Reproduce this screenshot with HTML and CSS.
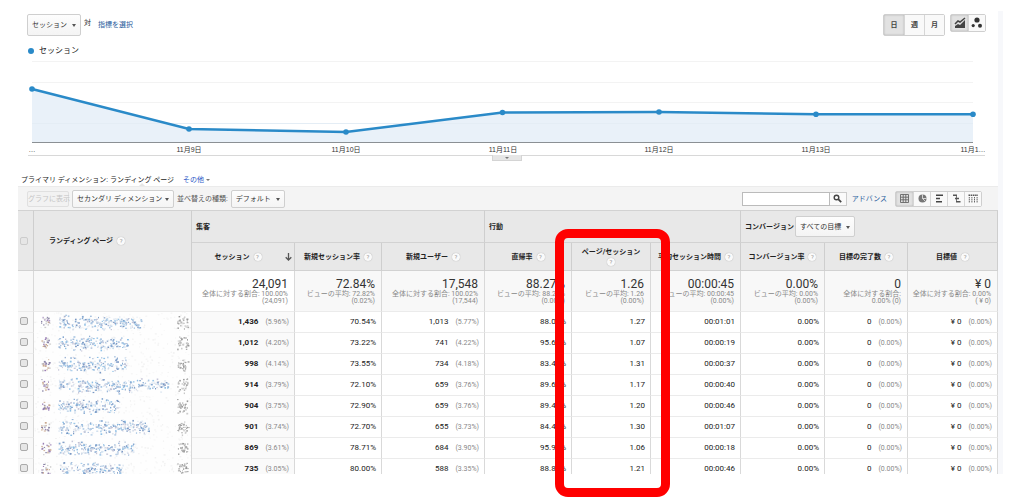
FILE: index.html
```html
<!DOCTYPE html>
<html lang="ja">
<head>
<meta charset="utf-8">
<title>ランディング ページ</title>
<link rel="stylesheet" href="styles.css">
</head>
<body>
<main class="report">
  <header class="topbar">
    <span class="dropdown"><select class="select metric" aria-label="指標"><option>セッション</option></select></span>
    <span class="versus">対</span>
    <a class="link pick" href="#">指標を選択</a>
    <div class="segment period">
      <button class="seg on">日</button><button class="seg">週</button><button class="seg">月</button>
    </div>
    <div class="segment charts">
      <button class="seg on" aria-label="折れ線グラフ"><svg width="12" height="12" viewBox="0 0 12 12"><path d="M1 11V9l3-2 2 1 5-5v8z" fill="#444"/><path d="M1 7l3-3 2 1 5-4" fill="none" stroke="#444" stroke-width="1.5"/></svg></button><button class="seg" aria-label="モーション グラフ"><svg width="12" height="12" viewBox="0 0 12 12"><circle cx="6" cy="3" r="2.6" fill="#333"/><circle cx="2.2" cy="8.6" r="1.6" fill="#333"/><circle cx="9" cy="8.8" r="2" fill="#333"/></svg></button>
    </div>
  </header>
  <div class="legend"><span class="dot"></span>セッション</div>
  <section class="chart">
    <svg class="plot" viewBox="0 0 957 97">
      <g stroke="#f3f3f3"><path d="M4 3.5H945M4 24.500H945M4 44.500H945M4 65.500H945"/></g>
      <path d="M4 31L161 71L318 74L474.500 54.500L631 54L788 56.300H945V84H4z" fill="#e9f1f9"/>
      <path d="M4 65.500H945" stroke="#e4edf5"/>
      <path d="M4 84.500H945" stroke="#8b9094"/>
      <path d="M4 31L161 71L318 74L474.500 54.500L631 54L788 56.300H945" fill="none" stroke="#2a8ac8" stroke-width="2.400"/>
      <g fill="#2a8ac8"><circle cx="4" cy="31" r="2.800"/><circle cx="161" cy="71" r="2.800"/><circle cx="318" cy="74" r="2.800"/><circle cx="474.500" cy="54.500" r="2.800"/><circle cx="631" cy="54" r="2.800"/><circle cx="788" cy="56.300" r="2.800"/><circle cx="945" cy="56.300" r="2.800"/></g>
      <g class="axis"><text x="4" y="94">…</text><text x="161" y="94">11月9日</text><text x="318" y="94">11月10日</text><text x="475" y="94">11月11日</text><text x="631" y="94">11月12日</text><text x="788" y="94">11月13日</text><text x="945" y="94">11月1…</text></g>
    </svg>
    <button class="handle" aria-label="グラフを開閉"></button>
  </section>
  <nav class="dimensions">
    <span>プライマリ ディメンション:</span>
    <span class="current">ランディング ページ</span>
    <a class="link other" href="#">その他</a>
  </nav>
  <div class="tools">
    <button class="plot-rows" disabled>グラフに表示</button>
    <span class="dropdown"><select class="select secondary" aria-label="セカンダリ ディメンション"><option>セカンダリ ディメンション</option></select></span>
    <label class="sort-label" for="sort">並べ替えの種類:</label>
    <span class="dropdown"><select class="select sort" id="sort"><option>デフォルト</option></select></span>
    <div class="search"><input class="query" type="text" aria-label="検索"><button class="go" aria-label="検索"><svg width="9" height="9" viewBox="0 0 9 9"><circle cx="3.500" cy="3.500" r="2.300" fill="none" stroke="#444" stroke-width="1.400"/><path d="M5.200 5.200L8.200 8.200" stroke="#444" stroke-width="1.800"/></svg></button></div>
    <a class="link advanced" href="#">アドバンス</a>
    <div class="segment views">
      <button class="seg on" aria-label="表"><svg width="9" height="9" viewBox="0 0 9 9"><path d="M.5 .5h8v8h-8zM.5 3.200h8M.5 5.800h8M3.200 .5v8M5.800 .5v8" fill="none" stroke="#666" stroke-width=".9"/></svg></button><button class="seg" aria-label="割合"><svg width="9" height="9" viewBox="0 0 9 9"><circle cx="4.500" cy="4.500" r="4" fill="#777"/><path d="M4.500 .5v4h4M4.500 4.500L7.300 7.300" fill="none" stroke="#eee" stroke-width=".8"/></svg></button><button class="seg" aria-label="サマリー"><svg width="9" height="9" viewBox="0 0 9 9"><path d="M1 1.200h7M1 4.500h4M1 7.800h6" stroke="#444" stroke-width="1.600"/></svg></button><button class="seg" aria-label="比較"><svg width="9" height="9" viewBox="0 0 9 9"><path d="M1 1.200h4M3 4.500h4M4 7.800h4.500" stroke="#555" stroke-width="1.400"/><path d="M4.500 1v7" stroke="#555" stroke-width=".8"/></svg></button><button class="seg" aria-label="ピボット"><svg width="10" height="9" viewBox="0 0 10 9"><path d="M.5 1.200H10" stroke="#555" stroke-width="1.400" stroke-dasharray="1.600 .6"/><path d="M1.300 3v6M3.900 3v6M6.500 3v6M9.100 3v6" stroke="#666" stroke-dasharray="1.400 .5"/></svg></button>
    </div>
  </div>
  <section class="data">
    <div class="clip">
      <table class="grid">
        <colgroup><col class="c16"><col class="c158"><col class="c103"><col class="c87"><col class="c103"><col class="c87"><col class="c79"><col class="c90"><col class="c84"><col class="c83"><col class="c90"></colgroup>
        <thead>
          <tr class="groups">
            <th rowspan="2" class="check"><input type="checkbox" class="tick faint" aria-label="すべて選択"></th>
            <th rowspan="2" class="landing">ランディング ページ<i class="help">?</i></th>
            <th colspan="3">集客</th>
            <th colspan="3">行動</th>
            <th colspan="3"><div class="conversion"><label for="goal">コンバージョン</label><span class="dropdown"><select class="select goal" id="goal"><option>すべての目標</option></select></span></div></th>
          </tr>
          <tr class="names">
            <th><div class="sorted">セッション<i class="help">?</i><svg class="arrow" width="7" height="8" viewBox="0 0 7 8"><path d="M3.500 0v7M.7 4.200l2.800 2.800 2.800-2.800" fill="none" stroke="#555" stroke-width="1.300"/></svg></div></th>
            <th>新規セッション率<i class="help">?</i></th>
            <th>新規ユーザー<i class="help">?</i></th>
            <th>直帰率<i class="help">?</i></th>
            <th>ページ/セッション<br><i class="help">?</i></th>
            <th>平均セッション時間<i class="help">?</i></th>
            <th>コンバージョン率<i class="help">?</i></th>
            <th>目標の完了数<i class="help">?</i></th>
            <th>目標値<i class="help">?</i></th>
          </tr>
        </thead>
        <tbody id="rows">
          <tr class="summary">
            <td></td><td></td>
            <td class="primary"><b>24,091</b>全体に対する割合: 100.00%<br>(24,091)</td>
            <td><b>72.84%</b>ビューの平均: 72.82%<br>(0.02%)</td>
            <td><b>17,548</b>全体に対する割合: 100.02%<br>(17,544)</td>
            <td><b>88.27%</b>ビューの平均: 88.27%<br>(0.00%)</td>
            <td><b>1.26</b>ビューの平均: 1.26<br>(0.00%)</td>
            <td><b>00:00:45</b>ビューの平均: 00:00:45<br>(0.00%)</td>
            <td><b>0.00%</b>ビューの平均: 0.00%<br>(0.00%)</td>
            <td><b>0</b>全体に対する割合:<br>0.00% (0)</td>
            <td><b>¥ 0</b>全体に対する割合: 0.00%<br>( ¥ 0)</td>
          </tr>
        </tbody>
      </table>
    </div>
    <div class="marker"></div>
  </section>
</main>
<script src="rows.js"></script>
</body>
</html>
```
FILE: styles.css
```css
* { box-sizing: border-box; }
body {
  margin: 0;
  min-height: 100vh;
  padding: 11px 6px 30px 18px;
  background: #fff;
  color: #222;
  font: 7px/10px Roboto, "Noto Sans CJK JP", sans-serif;
}
button, input, select { font: inherit; color: inherit; margin: 0; }
.report { border-right: 5px solid #f7f8fb; }
.link { color: #2a5d9c; text-decoration: none; }

.dropdown { position: relative; display: inline-flex; }
.dropdown::after {
  content: "";
  position: absolute;
  right: 5px;
  top: 50%;
  margin-top: -1px;
  border: 2px solid transparent;
  border-top: 3px solid #555;
  border-bottom: 0;
  pointer-events: none;
}
.select {
  appearance: none;
  height: 18px;
  padding: 0 10px 0 4px;
  border: 1px solid #cfcfcf;
  border-radius: 2px;
  background: linear-gradient(#fdfdfd, #f4f4f4);
  color: #333;
}
.metric { width: 54px; height: 22px; }
.secondary { width: 102px; }
.sort { width: 54px; }
.goal { width: 60px; height: 21px; font-weight: 400; }

.topbar { display: flex; align-items: flex-start; padding: 3px 12px 0 9px; height: 29px; }
.versus { margin: 4px 0 0 3px; }
.pick { margin: 6px 0 0 7px; }
.segment { display: flex; border: 1px solid #cfcfcf; border-radius: 2px; }
.seg {
  display: flex;
  align-items: center;
  justify-content: center;
  padding: 0;
  border: 0;
  background: #f9f9f9;
  font-weight: 700;
  color: #444;
}
.seg + .seg { border-left: 1px solid #d6d6d6; }
.seg.on { background: #e2e2e2; box-shadow: inset 0 0 2px #aaa; }
.period { margin-left: auto; }
.period .seg { width: 20px; height: 20px; }
.charts { margin-left: 5px; }
.charts .seg { width: 17px; height: 16px; }

.legend { display: flex; align-items: center; gap: 5px; height: 18px; padding: 3px 0 0 10px; font-size: 8px; }
.dot { width: 6px; height: 6px; border-radius: 50%; background: #2a8ac8; }

.chart { position: relative; margin: 0 13px 0 10px; border-bottom: 1px solid #d8d8d8; }
.plot { display: block; width: 100%; }
.axis { font: 7px "Liberation Sans", "Noto Sans CJK JP", sans-serif; fill: #333; text-anchor: middle; }
.handle {
  position: absolute;
  left: 50%;
  top: 100%;
  width: 30px;
  height: 6px;
  margin-left: -15px;
  padding: 0;
  border: 1px solid #d4d4d4;
  border-top: 0;
  background: #e6e6e6;
}
.handle::before, .other::after {
  content: "";
  display: inline-block;
  width: 0;
  border: 2px solid transparent;
  border-top-color: #777;
  border-bottom: 0;
}
.handle::before { display: block; margin: 0 auto; }

.dimensions { display: flex; gap: 2px; padding: 17px 0 0 3px; height: 30px; line-height: 14px; }
.current { position: relative; margin-right: 7px; }
.current::after {
  content: "";
  position: absolute;
  left: 50%;
  bottom: 0;
  margin-left: -3px;
  border: 3px solid transparent;
  border-top: 0;
  border-bottom-color: #e6e6e6;
}
.other { color: #2a56c6; }
.other::after { margin: 0 0 1px 2px; }

.tools { display: flex; align-items: center; gap: 3px; height: 24px; padding: 0 16px 0 9px; background: #f4f4f4; border-top: 1px solid #ebebeb; }
.plot-rows { width: 42px; height: 16px; padding: 0; border: 1px solid #e0e0e0; border-radius: 2px; background: #f2f2f2; color: #c4c4c4; white-space: nowrap; }
.sort-label { color: #555; }
.search { display: flex; margin-left: auto; }
.query { width: 88px; height: 14px; padding: 0 2px; border: 1px solid #bbb; background: #fff; }
.go { display: flex; align-items: center; justify-content: center; width: 17px; height: 14px; padding: 0; border: 1px solid #ccc; border-left: 0; background: #fafafa; }
.advanced { margin: 0 5px 0 2px; }
.views .seg { width: 17px; height: 14px; }

.data { position: relative; }
.clip { overflow: hidden; }
.grid { width: 100%; margin-bottom: -6px; table-layout: fixed; border-collapse: separate; border-spacing: 0; }
.c16 { width: 16px; }
.c158 { width: 158px; }
.c103 { width: 103px; }
.c87 { width: 87px; }
.c79 { width: 79px; }
.c90 { width: 90px; }
.c84 { width: 84px; }
.c83 { width: 83px; }
th, td { border-right: 1px solid #d9d9d9; }
th { padding: 0; background: #e8e8e8; border-right-color: #cecece; border-bottom: 1px solid #d2d2d2; white-space: nowrap; }
.groups th { height: 33px; border-top: 1px solid #d2d2d2; padding-left: 4px; text-align: left; }
.names th { height: 28px; }
.groups .check { padding: 0 0 0 2px; }
.groups .landing { padding-left: 15px; }
.conversion { display: flex; align-items: center; gap: 1px; }
.sorted { position: relative; padding-right: 10px; }
.arrow { position: absolute; right: 2px; top: 1px; }
.help {
  display: inline-block;
  width: 8px;
  height: 8px;
  margin-left: 4px;
  border-radius: 50%;
  background: #fafafa;
  box-shadow: 0 0 1px #999;
  color: #999;
  font: 6px/8px Roboto, sans-serif;
  text-align: center;
}
br + .help { margin-left: 0; }
.tick { appearance: none; display: block; width: 8px; height: 8px; border: 1px solid #aaa; border-radius: 2px; background: #e6e6e6; }
.faint { border-color: #ccc; }

td { height: 21px; padding: 0 5px 0 0; border-bottom: 1px solid #ebebeb; text-align: right; font-size: 8px; white-space: nowrap; }
.summary td { height: 41px; padding: 7px 6px 0 0; background: #f8f8f8; color: #888; font-size: 7px; line-height: 7px; vertical-align: top; }
.summary b { display: block; color: #333; font-size: 12px; line-height: 13px; font-weight: 400; }
.summary .primary { background: #fff; }
td.check-cell { padding: 0 0 2px 2px; background: #f8f8f8; }
.lead { background: #fafafa; font-weight: 700; }
td.masked { padding: 0; border-bottom: 0; background: #fefefe; }
.speckle { display: block; width: 157px; height: 21px; }
.share { margin-left: 7px; color: #888; font-size: 7px; font-weight: 400; }

.marker { position: absolute; top: 19px; bottom: -23px; left: 54.8%; width: 11.7%; border: 9px solid #f00; border-radius: 13px; }
```
FILE: rows.js
```js
const rows = [
  ['1,436', '5.96', '70.54', '1,013', '5.77', '88.02', '1.27', '00:01:01', 108],
  ['1,012', '4.20', '73.22', '741', '4.22', '95.65', '1.07', '00:00:19', 93],
  ['998', '4.14', '73.55', '734', '4.18', '83.47', '1.31', '00:00:37', 92],
  ['914', '3.79', '72.10', '659', '3.76', '89.61', '1.17', '00:00:40', 134],
  ['904', '3.75', '72.90', '659', '3.76', '89.49', '1.20', '00:00:46', 85],
  ['901', '3.74', '72.70', '655', '3.73', '84.46', '1.30', '00:01:07', 116],
  ['869', '3.61', '78.71', '684', '3.90', '95.97', '1.06', '00:00:18', 100],
  ['735', '3.05', '80.00', '588', '3.35', '88.84', '1.21', '00:00:46', 89]
];

let seed = 71;
function rand() {
  seed = (seed * 16807) % 2147483647;
  return seed / 2147483647;
}

// Scatter small dots between x0 and x1, denser towards the row's middle.
function scatter(count, x0, x1, spread, colors) {
  let out = '';
  for (let i = 0; i < count; i++) {
    const x = x0 + rand() * (x1 - x0);
    const y = 10 + (rand() + rand() - 1) * spread;
    const color = colors[Math.floor(rand() * colors.length)];
    const w = 0.9 + rand() * 1.1;
    const h = 0.9 + rand() * 0.9;
    out += `<rect x="${x.toFixed(1)}" y="${y.toFixed(1)}" width="${w.toFixed(1)}" height="${h.toFixed(1)}" fill="${color}"/>`;
  }
  return out;
}

function speckle(end) {
  return '<svg class="speckle" viewBox="0 0 157 21" aria-hidden="true">' +
    scatter(130, 0, 156, 20, ['#f5f5f5', '#f2f2f2', '#f8f8f8']) +
    scatter(20, 7, 16, 7, ['#8b86a8', '#c9a98f', '#ccc', '#9a7fb5']) +
    scatter(Math.round((end - 24) * 2.4), 24, end, 8, ['#86a9d2', '#a9c6e3', '#7a98c4', '#c3c3d6', '#8fc0e6', '#d2dbe8', '#dfe8f2']) +
    scatter(28, 143, 154, 8, ['#999', '#bbb', '#ccc', '#aaa']) +
    '</svg>';
}

const share = value => `<span class="share">(${value}%)</span>`;

document.getElementById('rows').insertAdjacentHTML('beforeend', rows.map((r, i) => `
  <tr>
    <td class="check-cell"><input type="checkbox" class="tick" aria-label="行 ${i + 1}"></td>
    <td class="masked">${speckle(r[8])}</td>
    <td class="lead">${r[0]}${share(r[1])}</td>
    <td>${r[2]}%</td>
    <td>${r[3]}${share(r[4])}</td>
    <td>${r[5]}%</td>
    <td>${r[6]}</td>
    <td>${r[7]}</td>
    <td>0.00%</td>
    <td>0${share('0.00')}</td>
    <td>¥ 0${share('0.00')}</td>
  </tr>`).join(''));
```
